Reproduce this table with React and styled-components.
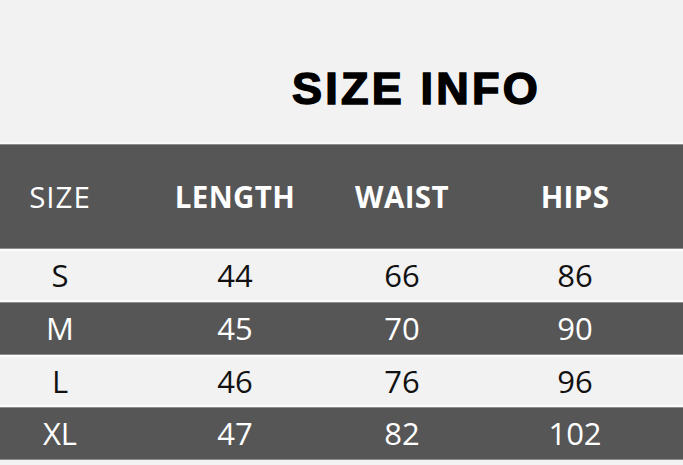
import React from 'react';
import styled, { createGlobalStyle } from 'styled-components';

const GlobalStyle = createGlobalStyle`
  html, body {
    margin: 0;
    padding: 0;
    background: #f2f2f2;
  }
  * {
    box-sizing: border-box;
  }
`;

const Page = styled.div`
  width: 683px;
  height: 465px;
  overflow: hidden;
  background: #f2f2f2;
  font-family: "Open Sans", "Noto Sans", sans-serif;
`;

const TitleBar = styled.div`
  height: 144px;
  padding: 66px 0 0 150px;
  border-bottom: 2px solid #fbfbfb;
  text-align: center;
`;

const Title = styled.h1`
  margin: 0;
  font-family: "Liberation Sans", Arial, sans-serif;
  font-size: 45px;
  line-height: 1;
  font-weight: 700;
  letter-spacing: 3.2px;
  color: #000;
  -webkit-text-stroke: 1.5px #000;
`;

const Row = styled.div`
  display: grid;
  grid-template-columns: 149px 172px 162px 184px;
  align-items: center;
  height: ${p => p.$height}px;
  background: ${p => (p.$dark ? '#565656' : '#f2f2f2')};
  color: ${p => (p.$dark ? '#ffffff' : '#111111')};
  border-top: ${p => (p.$dark ? '1px solid #8e8e8e' : '2px solid #fbfbfb')};
  border-bottom: ${p => (p.$dark ? '1px solid #8e8e8e' : '2px solid #fbfbfb')};
`;

const Cell = styled.div`
  text-align: center;
  font-size: ${p => (p.$head ? 29.5 : 31)}px;
  font-weight: ${p => (p.$bold ? 700 : 400)};
  letter-spacing: ${p => (p.$head ? (p.$bold ? '0.4px' : '1px') : '0')};
  line-height: 1;

  &:first-child {
    padding-right: 29px;
  }
`;

const sizes = [
  { size: 'S', length: 44, waist: 66, hips: 86 },
  { size: 'M', length: 45, waist: 70, hips: 90 },
  { size: 'L', length: 46, waist: 76, hips: 96 },
  { size: 'XL', length: 47, waist: 82, hips: 102 },
];

export default function App() {
  return (
    <Page>
      <GlobalStyle />
      <TitleBar>
        <Title>SIZE INFO</Title>
      </TitleBar>

      <Row $dark $height={105}>
        <Cell $head>SIZE</Cell>
        <Cell $head $bold>LENGTH</Cell>
        <Cell $head $bold>WAIST</Cell>
        <Cell $head $bold>HIPS</Cell>
      </Row>

      {sizes.map((s, i) => (
        <Row key={s.size} $dark={i % 2 === 1} $height={i === 2 ? 52 : 53}>
          <Cell>{s.size}</Cell>
          <Cell>{s.length}</Cell>
          <Cell>{s.waist}</Cell>
          <Cell>{s.hips}</Cell>
        </Row>
      ))}
    </Page>
  );
}
